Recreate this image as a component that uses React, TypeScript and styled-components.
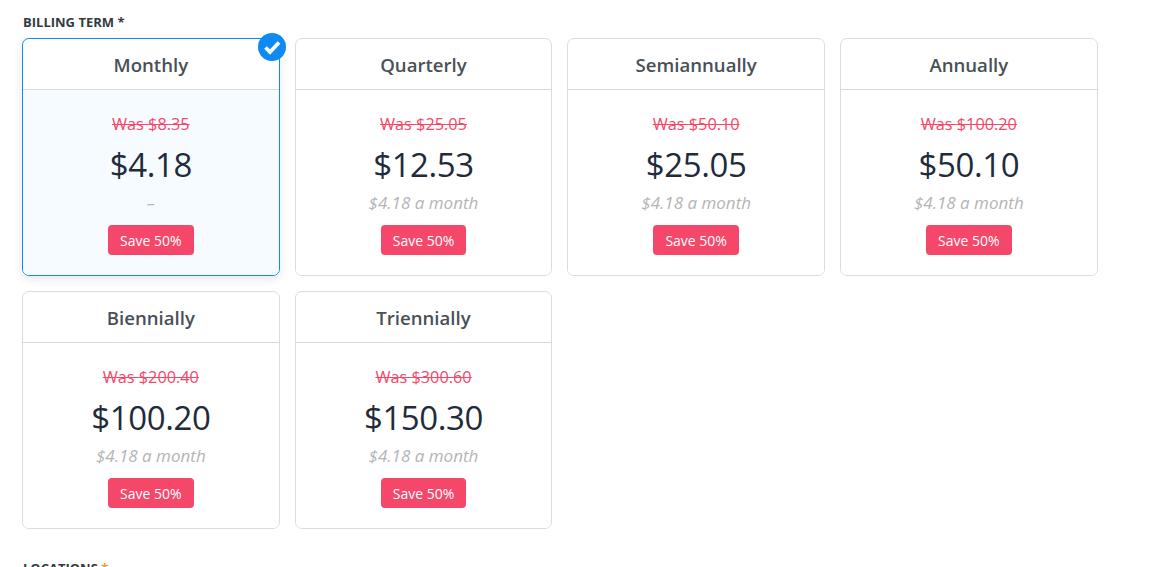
import React from 'react'
import styled, { createGlobalStyle } from 'styled-components'

const GlobalStyle = createGlobalStyle`
  html, body {
    margin: 0;
    height: 100%;
    overflow: hidden;
    background: #fff;
    font-family: 'Open Sans', 'Noto Sans', sans-serif;
  }
`

const Page = styled.div`
  width: 1075.67px;
  padding: 14px 0 0 22px;
`

const Label = styled.div`
  font-size: 13px;
  line-height: 17px;
  font-weight: 700;
  color: #343a40;
  text-transform: uppercase;
  margin-bottom: 7px;
  padding-left: 1px;
`

const TermGrid = styled.div`
  display: grid;
  grid-template-columns: repeat(4, 1fr);
  gap: 15px;
`

const Card = styled.div<{ $selected?: boolean }>`
  position: relative;
  height: 238px;
  box-sizing: border-box;
  border: 1px solid ${(p) => (p.$selected ? '#0d8bf2' : '#dcdcdc')};
  border-radius: 7px;
  display: flex;
  flex-direction: column;
  box-shadow: ${(p) => (p.$selected ? '0 3px 10px rgba(0, 0, 0, 0.1)' : 'none')};
`

const CardHeader = styled.div`
  height: 51px;
  flex: none;
  box-sizing: border-box;
  padding-top: 1px;
  border-bottom: 1px solid #d9d9d9;
  display: flex;
  align-items: center;
  justify-content: center;
  font-size: 18.6px;
  font-weight: 600;
  color: #495057;
`

const CardBody = styled.div<{ $selected?: boolean }>`
  flex: 1;
  display: flex;
  flex-direction: column;
  align-items: center;
  padding-top: 23px;
  border-radius: 0 0 6px 6px;
  background: ${(p) => (p.$selected ? '#f6fbff' : '#fff')};
`

const OldPrice = styled.div`
  font-size: 16.3px;
  line-height: 22px;
  color: #f5476a;
  text-decoration: line-through;
`

const Price = styled.div`
  font-size: 33px;
  line-height: 46px;
  margin-top: 7px;
  letter-spacing: -0.4px;
  color: #212b3a;
`

const Monthly = styled.div`
  font-size: 17px;
  line-height: 24px;
  margin-top: 3px;
  font-style: italic;
  color: #b4b4b4;
`

const SaveBadge = styled.div`
  margin-top: 10px;
  height: 30px;
  width: 85.6px;
  border-radius: 4px;
  background: #f5476a;
  color: #fff;
  font-size: 14px;
  display: flex;
  align-items: center;
  justify-content: center;
`

const CheckMark = styled.svg`
  position: absolute;
  top: -6px;
  right: -7px;
  width: 28px;
  height: 28px;
`

const SectionLabel = styled(Label)`
  margin-top: 31px;
`

const Required = styled.span`
  color: #f0a020;
`

const terms = [
  { name: 'Monthly', was: '$8.35', price: '$4.18', month: '–', selected: true },
  { name: 'Quarterly', was: '$25.05', price: '$12.53', month: '$4.18 a month' },
  { name: 'Semiannually', was: '$50.10', price: '$25.05', month: '$4.18 a month' },
  { name: 'Annually', was: '$100.20', price: '$50.10', month: '$4.18 a month' },
  { name: 'Biennially', was: '$200.40', price: '$100.20', month: '$4.18 a month' },
  { name: 'Triennially', was: '$300.60', price: '$150.30', month: '$4.18 a month' },
]

const App: React.FC = () => {
  return (
    <Page>
      <GlobalStyle />
      <Label>Billing Term *</Label>
      <TermGrid>
        {terms.map((term) => (
          <Card key={term.name} $selected={term.selected}>
            <CardHeader>{term.name}</CardHeader>
            <CardBody $selected={term.selected}>
              <OldPrice>Was {term.was}</OldPrice>
              <Price>{term.price}</Price>
              <Monthly>{term.month}</Monthly>
              <SaveBadge>Save 50%</SaveBadge>
            </CardBody>
            {term.selected && (
              <CheckMark viewBox="0 0 28 28">
                <circle cx="14" cy="14" r="14" fill="#0d8bf2" />
                <path
                  d="M7.5 14.5l4.5 4.5 9-9.5"
                  fill="none"
                  stroke="#fff"
                  strokeWidth="3.8"
                />
              </CheckMark>
            )}
          </Card>
        ))}
      </TermGrid>
      <SectionLabel>
        Locations <Required>*</Required>
      </SectionLabel>
    </Page>
  )
}

export default App
